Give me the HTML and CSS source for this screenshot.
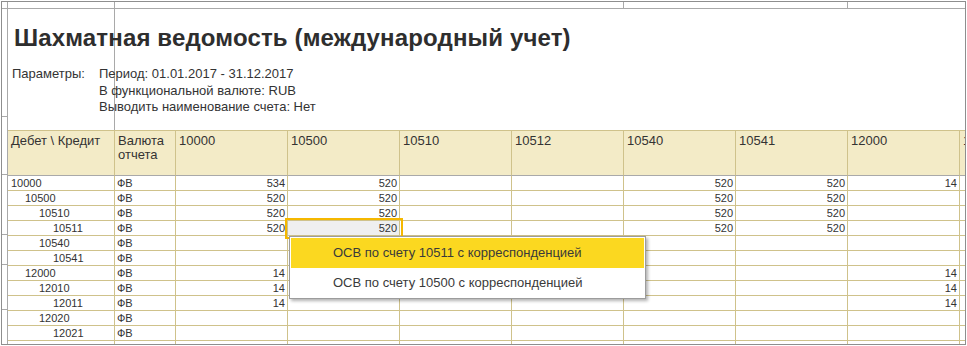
FILE: index.html
```html
<!DOCTYPE html>
<html lang="ru">

<head>
    <meta charset="UTF-8">
    <title>Шахматная ведомость</title>
    <link rel="stylesheet" href="styles.css">
</head>

<body>
    <div class="sheet">
        <div class="strip">
            <span class="s1"></span>
            <span class="s2"></span>
            <span class="s3"></span>
            <span class="s4"></span>
        </div>

        <div class="main">
            <!-- row group marks -->
            <div class="gutter">
                <div class="g g1"></div>
                <div class="g g2"></div>
                <div class="g g3"></div>
                <div class="g g4"></div>
                <div class="g g5"></div>
            </div>

            <div class="content">
                <div class="head">
                    <h1>Шахматная ведомость (международный учет)</h1>
                    <div class="params">
                        <span>Параметры:</span>
                        <div>
                            <p>Период: 01.01.2017 - 31.12.2017</p>
                            <p>В функциональной валюте: RUB</p>
                            <p>Выводить наименование счета: Нет</p>
                        </div>
                    </div>
                </div>

                <table class="report">
                    <colgroup>
                        <col class="c-acc">
                        <col class="c-cur">
                        <col class="c-num" span="8">
                    </colgroup>
                    <thead>
                        <tr>
                            <th>Дебет \ Кредит</th>
                            <th>Валюта<br>отчета</th>
                            <th>10000</th>
                            <th>10500</th>
                            <th>10510</th>
                            <th>10512</th>
                            <th>10540</th>
                            <th>10541</th>
                            <th>12000</th>
                            <th>12010</th>
                        </tr>
                    </thead>
                    <tbody>
                        <tr>
                            <td class="acc l0">10000</td><td>ФВ</td>
                            <td class="n">534</td><td class="n">520</td><td></td><td></td>
                            <td class="n">520</td><td class="n">520</td><td class="n">14</td><td></td>
                        </tr>
                        <tr>
                            <td class="acc l1">10500</td><td>ФВ</td>
                            <td class="n">520</td><td class="n">520</td><td></td><td></td>
                            <td class="n">520</td><td class="n">520</td><td></td><td></td>
                        </tr>
                        <tr>
                            <td class="acc l2">10510</td><td>ФВ</td>
                            <td class="n">520</td><td class="n">520</td><td></td><td></td>
                            <td class="n">520</td><td class="n">520</td><td></td><td></td>
                        </tr>
                        <tr>
                            <td class="acc l3">10511</td><td>ФВ</td>
                            <td class="n">520</td><td class="n selected">520</td><td></td><td></td>
                            <td class="n">520</td><td class="n">520</td><td></td><td></td>
                        </tr>
                        <tr>
                            <td class="acc l2">10540</td><td>ФВ</td>
                            <td></td><td></td><td></td><td></td><td></td><td></td><td></td><td></td>
                        </tr>
                        <tr>
                            <td class="acc l3">10541</td><td>ФВ</td>
                            <td></td><td></td><td></td><td></td><td></td><td></td><td></td><td></td>
                        </tr>
                        <tr>
                            <td class="acc l1">12000</td><td>ФВ</td>
                            <td class="n">14</td><td></td><td></td><td></td>
                            <td></td><td></td><td class="n">14</td><td></td>
                        </tr>
                        <tr>
                            <td class="acc l2">12010</td><td>ФВ</td>
                            <td class="n">14</td><td></td><td></td><td></td>
                            <td></td><td></td><td class="n">14</td><td></td>
                        </tr>
                        <tr>
                            <td class="acc l3">12011</td><td>ФВ</td>
                            <td class="n">14</td><td></td><td></td><td></td>
                            <td></td><td></td><td class="n">14</td><td></td>
                        </tr>
                        <tr>
                            <td class="acc l2">12020</td><td>ФВ</td>
                            <td></td><td></td><td></td><td></td><td></td><td></td><td></td><td></td>
                        </tr>
                        <tr>
                            <td class="acc l3">12021</td><td>ФВ</td>
                            <td></td><td></td><td></td><td></td><td></td><td></td><td></td><td></td>
                        </tr>
                        <tr>
                            <td></td><td></td><td></td><td></td><td></td><td></td><td></td><td></td><td></td><td></td>
                        </tr>
                    </tbody>
                </table>
            </div>
        </div>
    </div>

    <!-- context menu over the selected cell -->
    <div class="menu">
        <div class="item active">ОСВ по счету 10511 с корреспонденцией</div>
        <div class="item">ОСВ по счету 10500 с корреспонденцией</div>
    </div>
</body>

</html>
```

FILE: styles.css
```css
:root {
    --frame: #8e8e8e;
    --grid: #a9a9a9;
    --cell-line: #cfc28b;
    --head-bg: #f3ebc7;
    --text: #333333;
    --select: #f5b800;
    --menu-hl: #fbd820;
}

body {
    margin: 0;
    font-family: "Liberation Sans", Arial, sans-serif;
    color: var(--text);
    background: #fff;
}

.sheet {
    margin: 1px 0 0 1px;
    width: 965px;
    height: 344px;
    box-sizing: border-box;
    border: 1px solid var(--frame);
    display: flex;
    flex-direction: column;
    overflow: hidden;
}

.strip {
    flex: none;
    height: 6px;
    display: flex;
    border-bottom: 1px solid var(--grid);
}

.strip span {
    border-right: 1px solid var(--grid);
}

.s1 { width: 5px; }
.s2 { width: 106px; }
.s3 { width: 508px; }
.s4 { width: 223px; }

.main {
    flex: 1;
    min-height: 0;
    display: flex;
}

.gutter {
    flex: none;
    width: 5px;
    border-right: 1px solid var(--grid);
    display: flex;
    flex-direction: column;
}

.g {
    flex: none;
    border-bottom: 1px solid var(--grid);
}

.g1 { height: 107px; }
.g2 { height: 57px; }
.g3 { height: 59px; }
.g4 { height: 29px; }
.g5 { height: 44px; }

.content {
    flex: 1;
    min-width: 0;
    overflow: hidden;
}

.head {
    height: 121px;
    box-sizing: border-box;
    padding-top: 15px;
    background: linear-gradient(var(--grid), var(--grid)) 106px 0 / 1px 100% no-repeat;
}

.head h1 {
    margin: 0;
    padding-left: 6px;
    font-size: 24px;
    line-height: 27px;
    letter-spacing: 0.15px;
    font-weight: bold;
    color: #2e2e2e;
}

.params {
    display: grid;
    grid-template-columns: 87px auto;
    margin-top: 15px;
    padding-left: 4px;
    font-size: 13px;
    line-height: 16.5px;
}

.params p {
    margin: 0;
}

.report {
    table-layout: fixed;
    width: 1064px;
    border-collapse: separate;
    border-spacing: 0;
}

.c-acc { width: 107px; }
.c-cur { width: 61px; }
.c-num { width: 112px; }

.report th {
    box-sizing: border-box;
    height: 46px;
    padding: 3px 3px 0;
    background: var(--head-bg);
    border-top: 1px solid var(--cell-line);
    border-right: 1px solid var(--cell-line);
    border-bottom: 1px solid var(--grid);
    text-align: left;
    vertical-align: top;
    font-weight: normal;
    font-size: 13px;
    line-height: 14px;
    white-space: nowrap;
    overflow: hidden;
}

.report td {
    box-sizing: border-box;
    height: 15px;
    padding: 1px 2px 0;
    border-right: 1px solid var(--cell-line);
    border-bottom: 1px solid var(--cell-line);
    font-size: 11px;
    line-height: 13px;
    white-space: nowrap;
    overflow: hidden;
}

.report td.n {
    text-align: right;
}

.acc.l0 { padding-left: 3px; }
.acc.l1 { padding-left: 17px; }
.acc.l2 { padding-left: 31px; }
.acc.l3 { padding-left: 45px; }

.report td.selected {
    background: #efefef;
    outline: 2px solid var(--select);
    outline-offset: 1px;
}

.menu {
    position: absolute;
    left: 289px;
    top: 236px;
    width: 353px;
    padding: 1px 1px 0;
    background: #fff;
    border: 1px solid #9c9c9c;
    box-shadow: 2px 2px 3px rgba(0, 0, 0, 0.3);
}

.item {
    height: 30px;
    padding-left: 42px;
    font-size: 13px;
    line-height: 30px;
    color: #3a3a3a;
}

.item.active {
    background: var(--menu-hl);
}
```
